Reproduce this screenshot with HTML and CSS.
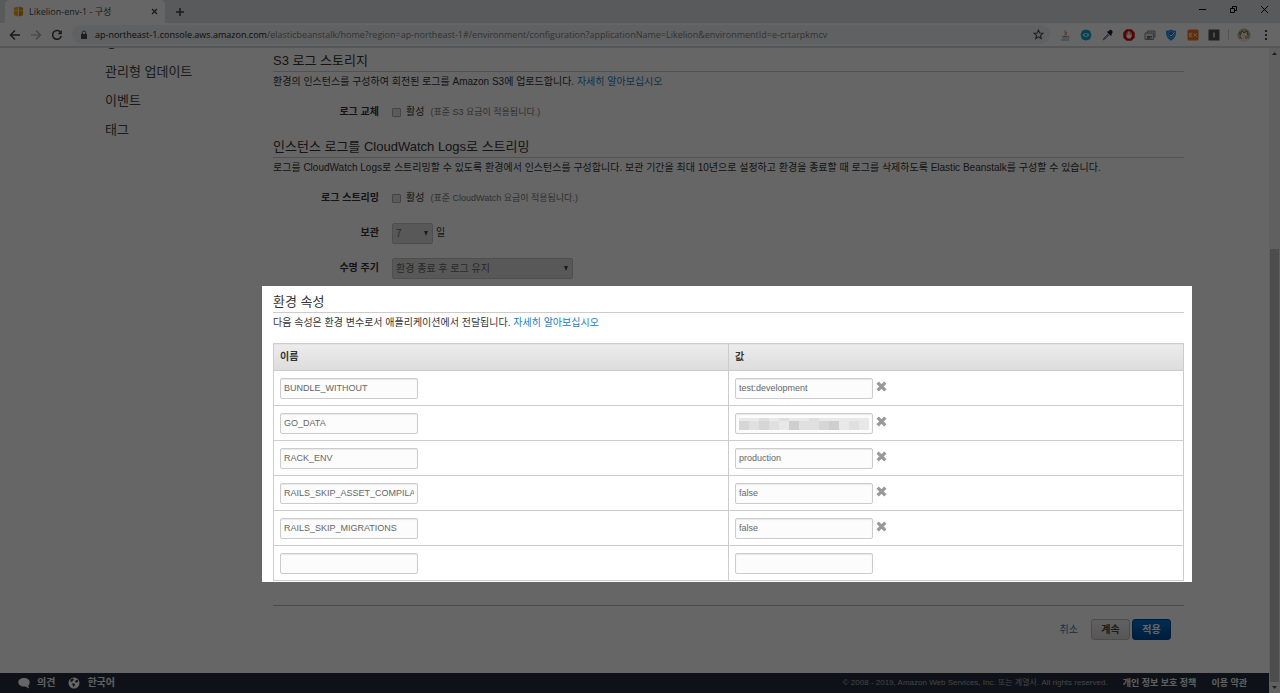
FILE: index.html
```html
<!DOCTYPE html>
<html lang="ko">
<head>
    <meta charset="UTF-8">
    <meta name="viewport" content="width=device-width, initial-scale=1.0">
    <title>Likelion-env-1 - 구성</title>
    <link rel="stylesheet" href="styles.css">
</head>
<body>
    <header class="browser">
        <div class="tabs">
            <div class="tab">
                <svg class="favicon" viewBox="0 0 12 12"><path fill="#f5a81c" d="M1 2l4.600-1.500v11L1 10z"/><path fill="#d98a0b" d="M6.400.5L11 2v8l-4.600 1.500z"/><path fill="#fbd078" d="M1 4.500h4.600v1H1zM6.400 4.500H11v1H6.400z"/></svg>
                <span class="tab-title">Likelion-env-1 - 구성</span>
                <button class="icon-btn" aria-label="탭 닫기"><svg width="7" height="7" viewBox="0 0 7 7"><path d="M1 1l5 5M6 1L1 6" stroke="#3c4043" stroke-width="1.200"/></svg></button>
            </div>
            <button class="icon-btn new-tab" aria-label="새 탭"><svg width="10" height="10" viewBox="0 0 10 10"><path d="M5 1v8M1 5h8" stroke="#3c4043" stroke-width="1.500"/></svg></button>
            <div class="window-btns">
                <button class="icon-btn" aria-label="최소화"><svg width="9" height="9" viewBox="0 0 9 9"><path d="M1 4.500h7" stroke="#000"/></svg></button>
                <button class="icon-btn" aria-label="이전 크기로"><svg width="9" height="9" viewBox="0 0 9 9"><path d="M1.500 3.500h4v4h-4zM3.500 3.500v-2h4v4h-2" fill="none" stroke="#000"/></svg></button>
                <button class="icon-btn" aria-label="닫기"><svg width="9" height="9" viewBox="0 0 9 9"><path d="M1 1l7 7M8 1L1 8" stroke="#000"/></svg></button>
            </div>
        </div>
        <div class="toolbar">
            <div class="nav-btns">
                <button class="icon-btn" aria-label="뒤로"><svg width="12" height="12" viewBox="0 0 12 12"><path d="M11 6H2M6 1.500L1.500 6 6 10.500" fill="none" stroke="#3c4043" stroke-width="1.500"/></svg></button>
                <button class="icon-btn" aria-label="앞으로"><svg width="12" height="12" viewBox="0 0 12 12"><path d="M1 6h9M6 1.500L10.500 6 6 10.500" fill="none" stroke="#a5a8ac" stroke-width="1.200"/></svg></button>
                <button class="icon-btn" aria-label="새로고침"><svg width="12" height="12" viewBox="0 0 12 12"><path d="M9.800 3.600A4.400 4.400 0 1 0 10.300 7" fill="none" stroke="#3c4043" stroke-width="1.500"/><path d="M10.800 1v4.200H6.600z" fill="#3c4043"/></svg></button>
            </div>
            <div class="omnibox">
                <svg class="lock" viewBox="0 0 8 10"><path fill="#4a4d51" d="M1 4h6v5H1z"/><path d="M2.300 4V2.700a1.700 1.700 0 0 1 3.400 0V4" fill="none" stroke="#4a4d51"/></svg>
                <span class="url"><span class="host">ap-northeast-1.console.aws.amazon.com</span>/elasticbeanstalk/home?region=ap-northeast-1#/environment/configuration?applicationName=Likelion&amp;environmentId=e-crtarpkmcv</span>
                <button class="icon-btn" aria-label="북마크"><svg width="11" height="11" viewBox="0 0 12 12"><path d="M6 1.200l1.400 3.200 3.400.3-2.600 2.300.8 3.400-3-1.800-3 1.800.8-3.400L1.200 4.700l3.400-.3z" fill="none" stroke="#45484c" stroke-width="1.200"/></svg></button>
            </div>
            <div class="extensions">
                <svg viewBox="0 0 12 12"><path d="M7 1C4 3 8 4 5.500 6.500M8 3C6 4.500 8 5 7 6.500" fill="none" stroke="#e0873c"/><path d="M3 7.500h6M3.500 9h4.500M2 11h8M9 7.500c2 0 1 2-.5 2" fill="none" stroke="#8fa5bb"/></svg>
                <svg viewBox="0 0 12 12"><path fill="#0ea5d6" d="M6 .5l4 1.300L11.500 6 10 10.200 6 11.500l-4-1.300L.5 6 2 1.800z"/><path d="M2.500 6Q6 2 9.500 6 6 10 2.500 6z" fill="#d8f2fa"/><circle cx="6" cy="6" r="1.300" fill="#0ea5d6"/></svg>
                <svg viewBox="0 0 12 12"><path d="M7 1.500a2 2 0 1 1 3 3L8.500 6 6 3.500z" fill="#222"/><path d="M5.500 2.500l4 4" stroke="#222" stroke-width="1.500"/><path d="M6.500 4.500L2 9l-.8 2L3 10l4.500-4.500" fill="#9fb6ee" stroke="#5064a0" stroke-width=".8"/></svg>
                <svg viewBox="0 0 12 12"><path fill="#d40808" d="M3.500.3h5l3.200 3.200v5l-3.200 3.200h-5L.3 8.500v-5z"/><path d="M4 8V4M5.300 7V2.700M6.700 7V2.700M8 7.500V4" stroke="#fff" stroke-linecap="round"/><path fill="#fff" d="M3.600 6h4.900v1.500L7.500 9.500h-3z"/></svg>
                <svg viewBox="0 0 12 12"><path d="M3.500 4V2H11v6H9.500M1 4h8.500v6.500H1z" fill="#e4e4e4" stroke="#888"/><path fill="#db4437" d="M3 7h5v1.300H3z"/><path fill="#0f9d58" d="M3 8.300h2.500V10H3z"/><path fill="#f4b400" d="M6.500 8.300H8V10H6.500z"/><circle cx="5.700" cy="8.500" r="1" fill="#4285f4"/></svg>
                <svg viewBox="0 0 12 12"><path fill="#228ee8" d="M6 .5q2.500 1.300 5 1.300.6 7-5 10-5.600-3-5-10 2.500 0 5-1.300z"/><circle cx="6" cy="5.700" r="3" fill="#1672d0" stroke="#7cc0f8" stroke-width=".7"/><path d="M4.500 5.500L6 7l3.500-3.500" fill="none" stroke="#fff"/></svg>
                <svg viewBox="0 0 12 12"><rect x=".5" y=".5" width="11" height="11" rx="1.500" fill="#ef7420"/><path d="M5.300 4.300H2.500v3.400h2.800M2.500 6H5M6.700 4.200l3 3.600M9.700 4.200l-3 3.600" fill="none" stroke="#ffe9d8" stroke-width=".9"/></svg>
                <svg viewBox="0 0 12 12"><path fill="#515151" d="M.5.5h11v11H.5z"/><path d="M6 3.500v5" stroke="#ddd" stroke-width="1.500"/></svg>
            </div>
            <span class="divider"></span>
            <svg class="avatar" viewBox="0 0 14 14"><circle cx="7" cy="7" r="6.500" fill="#b3b89c"/><path fill="#f2e6d8" d="M4 4h6v6l2 2-5 1.500L2.500 12 4 9z"/><path d="M3 7l2-4 2 2 3-2 1 4M3 9l2 2M9 8v3" fill="none" stroke="#8b5a3c"/><circle cx="3" cy="5" r="1" fill="#4c8d76"/></svg>
            <button class="icon-btn" aria-label="메뉴"><svg width="4" height="12" viewBox="0 0 4 12"><path d="M1 1h2v2H1zM1 5h2v2H1zM1 9h2v2H1z" fill="#45484c"/></svg></button>
        </div>
    </header>

    <div class="viewport">
        <div class="page">
            <div class="columns">
                <nav class="side-nav">
                    <a href="#">경고</a>
                    <a href="#">관리형 업데이트</a>
                    <a href="#">이벤트</a>
                    <a href="#">태그</a>
                </nav>
                <main class="content">
                    <section class="panel">
                        <h2>S3 로그 스토리지</h2>
                        <p>환경의 인스턴스를 구성하여 회전된 로그를 Amazon S3에 업로드합니다. <a href="#">자세히 알아보십시오</a></p>
                        <div class="field">
                            <label class="field-label" for="rotate">로그 교체</label>
                            <input type="checkbox" id="rotate">
                            <label for="rotate">활성</label>
                            <span class="hint">(표준 S3 요금이 적용됩니다.)</span>
                        </div>
                    </section>

                    <section class="panel">
                        <h2>인스턴스 로그를 CloudWatch Logs로 스트리밍</h2>
                        <p>로그를 CloudWatch Logs로 스트리밍할 수 있도록 환경에서 인스턴스를 구성합니다. 보관 기간을 최대 10년으로 설정하고 환경을 종료할 때 로그를 삭제하도록 Elastic Beanstalk를 구성할 수 있습니다.</p>
                        <div class="field">
                            <label class="field-label" for="stream">로그 스트리밍</label>
                            <input type="checkbox" id="stream">
                            <label for="stream">활성</label>
                            <span class="hint">(표준 CloudWatch 요금이 적용됩니다.)</span>
                        </div>
                        <div class="field">
                            <label class="field-label" for="retention">보관</label>
                            <span class="select select-sm"><select id="retention" disabled><option>7</option></select></span>
                            <span>일</span>
                        </div>
                        <div class="field">
                            <label class="field-label" for="lifecycle">수명 주기</label>
                            <span class="select select-lg"><select id="lifecycle" disabled><option>환경 종료 후 로그 유지</option></select></span>
                        </div>
                    </section>

                    <section class="panel spotlight">
                        <h2>환경 속성</h2>
                        <p>다음 속성은 환경 변수로서 애플리케이션에서 전달됩니다. <a href="#">자세히 알아보십시오</a></p>
                        <table class="props">
                            <thead>
                                <tr><th>이름</th><th>값</th></tr>
                            </thead>
                            <tbody>
                                <tr>
                                    <td><input type="text" aria-label="이름" value="BUNDLE_WITHOUT"></td>
                                    <td><div class="value"><input type="text" aria-label="값" value="test:development"><button class="icon-btn" aria-label="삭제"><svg class="remove" viewBox="0 0 10 10"><path d="M1.500 1.500l7 7M8.500 1.500l-7 7"/></svg></button></div></td>
                                </tr>
                                <tr>
                                    <td><input type="text" aria-label="이름" value="GO_DATA"></td>
                                    <td><div class="value"><input type="text" aria-label="값">
                                        <svg class="mosaic" viewBox="0 0 130 12">
                                            <path fill="#e9e9e9" d="M0 0h130v3H0z"/>
                                            <path fill="#dedede" d="M40 0h10v3H40zM70 0h10v3H70zM20 0h10v3H20z"/>
                                            <path fill="#e0e0e0" d="M0 3h130v9H0z"/>
                                            <path fill="#d6d6d6" d="M0 3h10v9H0zM20 3h10v9H20zM80 3h10v9H80z"/>
                                            <path fill="#cecece" d="M50 3h10v9H50zM90 3h10v9H90z"/>
                                            <path fill="#e8e8e8" d="M40 3h10v9H40zM100 3h10v9h-10zM120 3h10v9h-10z"/>
                                        </svg>
                                        <button class="icon-btn" aria-label="삭제"><svg class="remove" viewBox="0 0 10 10"><path d="M1.500 1.500l7 7M8.500 1.500l-7 7"/></svg></button></div></td>
                                </tr>
                                <tr>
                                    <td><input type="text" aria-label="이름" value="RACK_ENV"></td>
                                    <td><div class="value"><input type="text" aria-label="값" value="production"><button class="icon-btn" aria-label="삭제"><svg class="remove" viewBox="0 0 10 10"><path d="M1.500 1.500l7 7M8.500 1.500l-7 7"/></svg></button></div></td>
                                </tr>
                                <tr>
                                    <td><input type="text" aria-label="이름" value="RAILS_SKIP_ASSET_COMPILATION"></td>
                                    <td><div class="value"><input type="text" aria-label="값" value="false"><button class="icon-btn" aria-label="삭제"><svg class="remove" viewBox="0 0 10 10"><path d="M1.500 1.500l7 7M8.500 1.500l-7 7"/></svg></button></div></td>
                                </tr>
                                <tr>
                                    <td><input type="text" aria-label="이름" value="RAILS_SKIP_MIGRATIONS"></td>
                                    <td><div class="value"><input type="text" aria-label="값" value="false"><button class="icon-btn" aria-label="삭제"><svg class="remove" viewBox="0 0 10 10"><path d="M1.500 1.500l7 7M8.500 1.500l-7 7"/></svg></button></div></td>
                                </tr>
                                <tr>
                                    <td><input type="text" aria-label="이름"></td>
                                    <td><div class="value"><input type="text" aria-label="값"></div></td>
                                </tr>
                            </tbody>
                        </table>
                    </section>

                    <div class="actions">
                        <a href="#">취소</a>
                        <button class="btn">계속</button>
                        <button class="btn btn-primary">적용</button>
                    </div>
                </main>
            </div>

            <footer class="footer">
                <div class="footer-tools">
                    <a href="#"><svg width="12" height="12" viewBox="0 0 12 12"><path fill="#fff" d="M6 1C2.700 1 .3 2.800.3 5.300S2.700 9.600 6 9.600h1.500l3.700 1.900-1-2.800c1-.8 1.500-1.900 1.500-3.400C11.700 2.800 9.300 1 6 1z"/></svg>의견</a>
                    <a href="#"><svg width="12" height="12" viewBox="0 0 12 12"><circle cx="6" cy="6" r="5.500" fill="#fff"/><path fill="#232f3e" d="M2.500 2.500l2-1L6 2 5 3.500 3.800 5 2.500 4.500zM7 4l2.500-1.500L10.300 4 9 5.500 7.500 5.500zM4.500 6l2 .8.500 1.200L5.500 10 4.500 8z"/></svg>한국어</a>
                </div>
                <span class="copyright">© 2008 - 2019, Amazon Web Services, Inc. 또는 계열사. All rights reserved.</span>
                <a href="#">개인 정보 보호 정책</a>
                <a href="#">이용 약관</a>
            </footer>
        </div>
        <div class="scrollbar">
            <svg viewBox="0 0 11 11"><path d="M3 7l2.500-3L8 7z"/></svg>
            <div class="thumb"></div>
            <svg viewBox="0 0 11 11"><path d="M3 4l2.500 3L8 4z"/></svg>
        </div>
    </div>
</body>
</html>
```

FILE: styles.css
```css
* {
    box-sizing: border-box;
}
body {
    margin: 0;
    height: 100vh;
    display: flex;
    flex-direction: column;
    overflow: hidden;
    background: #fff;
    color: #333;
    font-family: "Liberation Sans", "Noto Sans CJK KR", sans-serif;
    font-size: 10px;
    line-height: 20px;
}
a {
    color: #1a80c4;
    text-decoration: none;
}
svg {
    display: block;
    flex: none;
}
.icon-btn {
    display: flex;
    padding: 0;
    border: 0;
    background: none;
}

/* browser window */
.browser {
    flex: none;
    border-bottom: 2px solid #d5d7da;
    font-family: "Open Sans", "Noto Sans CJK KR", sans-serif;
    font-size: 9px;
}
.tabs {
    display: flex;
    align-items: center;
    height: 23px;
    padding-left: 5px;
    background: #dee1e6;
}
.tab {
    display: flex;
    align-items: center;
    gap: 5px;
    width: 160px;
    height: 23px;
    padding: 0 7px 0 8px;
    border-radius: 5px 5px 0 0;
    background: #fff;
}
.favicon {
    width: 11px;
    height: 11px;
}
.tab-title {
    flex: 1;
    color: #45484c;
}
.new-tab {
    margin-left: 10px;
}
.window-btns {
    display: flex;
    gap: 22px;
    margin-left: auto;
    padding: 0 11px 4px 0;
}
.toolbar {
    display: flex;
    align-items: center;
    height: 23px;
    padding: 0 12px 0 9px;
}
.nav-btns {
    display: flex;
    gap: 9px;
    margin-right: 9px;
}
.omnibox {
    flex: 1;
    display: flex;
    align-items: center;
    height: 19px;
    padding: 0 6px 0 8px;
    border-radius: 9px;
    background: #f1f3f4;
}
.lock {
    width: 8px;
    height: 10px;
}
.url {
    flex: 1;
    margin-left: 7px;
    color: #7a7e83;
    white-space: nowrap;
}
.host {
    color: #202124;
}
.extensions {
    display: flex;
    justify-content: space-between;
    width: 161px;
    margin-left: 9px;
}
.extensions svg {
    width: 12px;
    height: 12px;
}
.divider {
    width: 1px;
    height: 11px;
    margin: 0 8px;
    background: #cfd1d4;
}
.avatar {
    width: 14px;
    height: 14px;
    margin-right: 13px;
}

/* console page */
.viewport {
    flex: 1;
    display: flex;
    min-height: 0;
}
.page {
    flex: 1;
    display: flex;
    flex-direction: column;
}
.columns {
    flex: 1;
    display: flex;
    padding-right: 77px;
}
.side-nav {
    display: flex;
    flex-direction: column;
    justify-content: flex-end;
    width: 262px;
    height: 96px;
    padding-left: 105px;
    overflow: hidden;
    font-size: 13px;
    line-height: 29px;
}
.side-nav a {
    flex: none;
    color: #444;
}
.content {
    flex: 1;
    padding-top: 3px;
}
.panel {
    padding: 0 8px 0 11px;
}
.panel + .panel {
    margin-top: 15px;
}
h2 {
    margin: 0;
    border-bottom: 1px solid #ccc;
    font-size: 13px;
    font-weight: 400;
    line-height: 20px;
}
p {
    margin: 0 0 10px;
}
.field {
    display: flex;
    align-items: center;
    height: 20px;
}
.field + .field {
    margin-top: 15px;
}
.field-label {
    width: 106px;
    margin-right: 13px;
    font-weight: 700;
    text-align: right;
}
input[type="checkbox"] {
    appearance: none;
    width: 9px;
    height: 9px;
    margin: 0 5px 0 0;
    border: 1px solid #aaa;
    border-radius: 1px;
    background: #e4e4e4;
}
.hint {
    margin-left: 6px;
    color: #777;
    font-size: 9px;
}
.select {
    position: relative;
    margin-right: 3px;
}
.select::after {
    content: '';
    position: absolute;
    top: 8px;
    right: 5px;
    border: 2px solid transparent;
    border-top: 5px solid #444;
    border-bottom: 0;
}
.select-sm {
    width: 41px;
}
.select-lg {
    width: 181px;
}
select {
    display: block;
    appearance: none;
    width: 100%;
    height: 21px;
    padding: 0 3px;
    border: 1px solid #c4c4c4;
    border-radius: 2px;
    background: #ddd;
    color: #666;
    font: inherit;
    opacity: 1;
}

/* everything around this panel is dimmed */
.panel.spotlight {
    position: relative;
    z-index: 10;
    margin-top: 8px;
    padding-top: 6px;
    padding-bottom: 1px;
    background: #fff;
    box-shadow: 0 0 0 2000px rgba(0, 0, 0, 0.6);
}
.props {
    width: 100%;
    table-layout: fixed;
    border-collapse: collapse;
}
.props th, .props td {
    height: 35px;
    padding: 0 6px;
    border: 1px solid #ccc;
    text-align: left;
}
.props th {
    height: 27px;
    background: linear-gradient(#ececec, #dcdcdc);
}
.props input {
    display: block;
    width: 138px;
    height: 21px;
    padding: 0 3px;
    border: 1px solid #ccc;
    border-radius: 2px;
    background: #fcfcfc;
    box-shadow: inset 0 1px 1px #e8e8e8;
    color: #666;
    font-family: inherit;
    font-size: 9px;
}
.value {
    position: relative;
    display: flex;
    align-items: center;
}
.value .icon-btn {
    margin-left: 3px;
    padding-bottom: 4px;
}
.remove {
    width: 11px;
    height: 11px;
    stroke: #999;
    stroke-width: 3;
}
.mosaic {
    position: absolute;
    top: 5px;
    left: 4px;
    width: 130px;
    height: 12px;
}
.actions {
    display: flex;
    justify-content: flex-end;
    align-items: center;
    gap: 2px;
    margin: 23px 8px 0 11px;
    padding: 13px 13px 0 0;
    border-top: 1px solid #bbb;
}
.actions a {
    margin-right: 11px;
}
.btn {
    width: 39px;
    height: 21px;
    padding: 0;
    border: 1px solid #bbb;
    border-radius: 3px;
    background: linear-gradient(#f2f2f2, #d8d8d8);
    color: #444;
    font: inherit;
    font-weight: 700;
}
.btn-primary {
    border-color: #004b91;
    background: linear-gradient(#0071ce, #004b9b);
    color: #fff;
}
.footer {
    display: flex;
    align-items: center;
    gap: 15px;
    height: 20px;
    padding: 0 22px 0 18px;
    background: #232f3e;
    color: #aaa;
    font-size: 9px;
}
.footer a {
    display: flex;
    align-items: center;
    gap: 7px;
    color: #eee;
    font-weight: 700;
}
.footer-tools {
    display: flex;
    gap: 13px;
    margin-right: auto;
    font-size: 10px;
}
.copyright {
    font-size: 8px;
}

.scrollbar {
    display: flex;
    flex-direction: column;
    width: 11px;
    background: #f1f1f1;
}
.scrollbar svg {
    width: 11px;
    height: 11px;
    fill: #505050;
}
.thumb {
    flex: 1;
    margin: 190px 1px 0;
    background: #c1c1c1;
}
```
